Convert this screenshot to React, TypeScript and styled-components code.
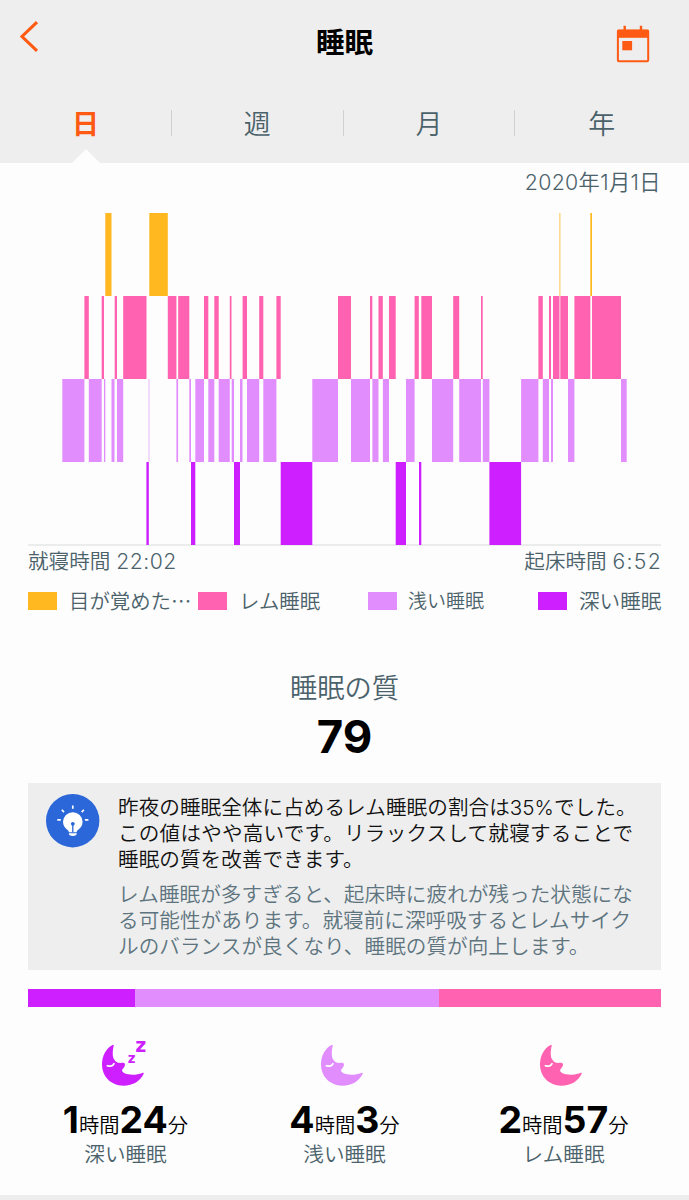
import React from 'react';
import styled, { createGlobalStyle } from 'styled-components';

const color = {
  awake: '#ffb81f',
  rem: '#ff62b0',
  light: '#e18dfd',
  deep: '#cd1fff',
  accent: '#ff5a13',
  slate: '#4b626b',
  panel: '#eeeeee',
  page: '#fdfdfd',
};

const GlobalStyle = createGlobalStyle`
  *, *::before, *::after { box-sizing: border-box; }
  body {
    margin: 0;
    background: ${color.page};
    font-family: Inter, "Noto Sans CJK JP", sans-serif;
    font-weight: 350;
    color: #000;
  }
  svg { display: block; }
`;

const Screen = styled.main`
  width: 689px;
  height: 1200px;
  overflow: hidden;
  display: flex;
  flex-direction: column;
  background: ${color.page};
`;

const Header = styled.header`
  height: 163px;
  flex: none;
  background: ${color.panel};
  display: flex;
  flex-direction: column;
`;

const TitleBar = styled.div`
  height: 86px;
  display: grid;
  grid-template-columns: 60px 1fr 60px;
  padding: 0 20px 0 20px;
`;

const IconButton = styled.button<{ $top: number; $end?: boolean }>`
  border: 0;
  padding: ${p => p.$top}px 0 0;
  background: none;
  display: flex;
  align-items: flex-start;
  justify-content: ${p => (p.$end ? 'flex-end' : 'flex-start')};
  padding-right: ${p => (p.$end ? 19 : 0)}px;
`;

const Title = styled.h1`
  margin: 0;
  text-align: center;
  font-size: 28.5px;
  line-height: 86px;
  font-weight: 700;
`;

const Tabs = styled.nav`
  height: 77px;
  display: grid;
  grid-template-columns: 171px 172.4px 171px 1fr;
`;

const Tab = styled.button<{ $active?: boolean }>`
  position: relative;
  border: 0;
  padding: 0;
  background: none;
  font: inherit;
  font-size: 27px;
  line-height: 74px;
  font-weight: ${p => (p.$active ? 700 : 350)};
  color: ${p => (p.$active ? color.accent : color.slate)};

  &:not(:first-child)::before {
    content: '';
    position: absolute;
    left: 0;
    top: 24px;
    width: 1px;
    height: 26px;
    background: #cfd1d2;
  }
`;

const TabPointer = styled.svg`
  position: absolute;
  left: 72px;
  bottom: 0;
`;

const DateLine = styled.div`
  height: 50px;
  flex: none;
  padding-right: 28px;
  text-align: right;
  font-size: 21.3px;
  line-height: 39px;
  letter-spacing: 0.35px;
  color: ${color.slate};
`;

const Chart = styled.svg`
  flex: none;
  margin-left: 28px;
`;

const TimeRow = styled.div`
  display: flex;
  flex: none;
  justify-content: space-between;
  height: 33px;
  padding: 0 27px 0 28px;
  font-size: 20.6px;
  line-height: 31px;
  color: ${color.slate};
`;

const Clock = styled.span<{ $spacing: number }>`
  font-size: 21.2px;
  letter-spacing: ${p => p.$spacing}px;
`;

const Legend = styled.div`
  display: grid;
  flex: none;
  grid-template-columns: 170px 170px 170px 1fr;
  padding-left: 28px;
  height: 46px;
`;

const LegendItem = styled.div<{ $size: number; $gap: number }>`
  display: flex;
  align-items: center;
  gap: ${p => p.$gap}px;
  height: 44px;
  font-size: ${p => p.$size}px;
  font-family: "Noto Sans CJK JP", sans-serif;
  white-space: nowrap;
  color: ${color.slate};
`;

const LegendText = styled.span`
  padding-bottom: 3px;
`;

const Swatch = styled.i<{ $color: string }>`
  width: 29px;
  height: 18px;
  background: ${p => p.$color};
`;

const Quality = styled.section`
  flex: none;
  height: 158px;
  padding-top: 44px;
  text-align: center;
`;

const QualityLabel = styled.div`
  font-size: 27.3px;
  line-height: 40px;
  color: ${color.slate};
`;

const QualityScore = styled.div`
  font-size: 45.5px;
  line-height: 56px;
  font-weight: 700;
`;

const Tip = styled.section`
  flex: none;
  display: flex;
  height: 187px;
  margin: 0 28px;
  padding: 11px 0 0 18px;
  gap: 18px;
  background: ${color.panel};
`;

const TipText = styled.div`
  padding-top: 1px;
  font-size: 20.6px;
  line-height: 26px;
  letter-spacing: 0.05px;
  white-space: nowrap;
`;

const Paragraph = styled.p<{ $muted?: boolean }>`
  margin: ${p => (p.$muted ? 9 : 0)}px 0 0;
  color: ${p => (p.$muted ? '#5d747e' : '#111')};
`;

const WideLine = styled.span`
  letter-spacing: 0.2px;
`;

const Distribution = styled.div`
  flex: none;
  display: flex;
  height: 18px;
  margin: 19px 28px 0;
`;

const Share = styled.div<{ $color: string; $grow: number }>`
  flex: ${p => p.$grow} 0 0;
  background: ${p => p.$color};
`;

const Stats = styled.section`
  flex: none;
  display: grid;
  grid-template-columns: repeat(3, 219px);
  padding-left: 16px;
  height: 188px;
`;

const Stat = styled.div`
  display: flex;
  flex-direction: column;
  align-items: center;
  padding-top: 38px;
`;

const Moon = styled.svg`
  overflow: visible;
  margin-right: 6px;
`;

const Duration = styled.div`
  margin-top: 14px;
  height: 41px;
  font-size: 20.3px;
  line-height: 40px;
  white-space: nowrap;

  b {
    font-size: 37.4px;
    line-height: 40px;
    font-weight: 700;
  }
`;

const StatLabel = styled.div`
  font-size: 20.6px;
  line-height: 28px;
  color: ${color.slate};
`;

const Footer = styled.div`
  flex: 1;
  background: #ededed;
`;

type Span = [number, number];

const phases: { fill: string; top: number; spans: Span[] }[] = [
  {
    fill: color.awake,
    top: 213,
    spans: [[105.3, 111.5], [149.3, 167.8], [559.5, 560.3], [590.3, 592]],
  },
  {
    fill: color.rem,
    top: 296,
    spans: [
      [84.4, 88.8], [101.7, 104], [114.7, 117], [123.2, 146.5], [167.8, 176.4], [178.2, 189.3],
      [204, 208.3], [214.3, 218.7], [229.8, 231.5], [242.6, 247], [259.2, 263.3], [276.4, 280.7],
      [338, 351], [370, 372.3], [378.5, 382.8], [389, 395.7], [414.6, 418.8], [421.3, 432],
      [453.2, 459.2], [481, 482.7], [538.4, 542.8], [549, 551], [553, 559.5], [560.3, 568],
      [574.4, 590.3], [592, 621],
    ],
  },
  {
    fill: color.light,
    top: 379,
    spans: [
      [62.3, 84.4], [88.8, 101.7], [104, 105.3], [111.5, 114.5], [117, 123.2], [148.7, 149.3],
      [176.4, 178.1], [189.3, 191], [195.3, 204], [208.3, 214.3], [218.7, 229.8], [231.7, 234],
      [240, 242.5], [247, 259.2], [263.3, 276.4], [312.3, 338], [351, 370], [372.4, 378.5],
      [382.9, 389], [406, 414.6], [432, 453.2], [459.2, 481], [482.8, 489.4], [521.1, 538.4],
      [542.8, 549], [551, 553], [568, 574.4], [621, 626.7],
    ],
  },
  {
    fill: color.deep,
    top: 462,
    spans: [
      [146.4, 148.8], [191, 195.3], [234, 240], [280.7, 312.3], [395.7, 406], [419, 421.3],
      [489.4, 521.1],
    ],
  },
];

function SleepChart() {
  return (
    <Chart width="633" height="333" viewBox="28 213 633 333">
      <rect x="28" y="544.5" width="633" height="1" fill="#d9dbdc" />
      {phases.map(({ fill, top, spans }) =>
        spans.map(([from, to]) => (
          <rect key={from} x={from} y={top} width={to - from} height="83" fill={fill} />
        )),
      )}
    </Chart>
  );
}

function MoonIcon({ fill, dreaming }: { fill: string; dreaming?: boolean }) {
  return (
    <Moon width="42" height="41" viewBox="35 45 126 123">
      <path
        fill={fill}
        d="M67 45C48 54 35 77 35 103C35 140 62 167 99 167C128 167 151 152 160 131C161 128 159 128 156 129C143 134 127 136 113 133C104 131 97 127 95 122C95 116 104 111 104 104C104 97 97 98 90 99C80 99 73 93 69 84C66 74 67 60 70 48C71 45 70 44 67 45Z"
      />
      <path d="M51 107Q66 112 71 101" fill="none" stroke="#fff" strokeWidth="5" strokeLinecap="round" />
      {dreaming && (
        <g fill={fill} fontFamily="DejaVu Sans" fontWeight="700">
          <text x="134.5" y="67" fontSize="57">z</text>
          <text x="112" y="100" fontSize="40">z</text>
        </g>
      )}
    </Moon>
  );
}

function BulbIcon() {
  return (
    <svg width="54" height="54" viewBox="0 0 54 54">
      <circle cx="26.7" cy="26.7" r="26.7" fill="#2b67d9" />
      <path
        d="M26.8 18.2a9.8 9.8 0 0 0-9.8 9.6c0 4 2.3 6.7 4.6 8.2.9.6 1.1 1.3 1.2 2.2h7.9c.1-.9.3-1.6 1.2-2.2 2.4-1.5 4.7-4.2 4.7-8.2a9.8 9.8 0 0 0-9.8-9.6Z"
        fill="#fff"
      />
      <path d="M22.8 39.3h8c0 1.8-1.4 2.7-4 2.7s-4-.9-4-2.7Z" fill="#fff" />
      <circle cx="26.8" cy="29.8" r="1.9" fill="#2b67d9" />
      <path d="M26.8 30v8.5" stroke="#2b67d9" strokeWidth="1.3" />
      <path
        d="M26.8 11.4v3.4M15.8 15.7l2.2 2.4M37.9 15.7l-2.2 2.4M11.3 25.8h3.5M38.9 25.8h3.5"
        stroke="#fff"
        strokeWidth="1.7"
      />
    </svg>
  );
}

export default function App() {
  return (
    <Screen>
      <GlobalStyle />
      <Header>
        <TitleBar>
          <IconButton $top={21} aria-label="back">
            <svg width="19" height="31" viewBox="0 0 19 31">
              <path d="M17 1.2L2 15.5L17 29.8" fill="none" stroke={color.accent} strokeWidth="3.1" />
            </svg>
          </IconButton>
          <Title>睡眠</Title>
          <IconButton $top={25} $end aria-label="calendar">
            <svg width="34" height="38" viewBox="0 0 34 38">
              <path d="M8.7 .8v6M25 .8v6" stroke={color.accent} strokeWidth="2.4" />
              <rect x="1.9" y="5.6" width="30.3" height="30.7" rx="1" fill="none" stroke={color.accent} strokeWidth="2" />
              <rect x="1.4" y="4.8" width="31.4" height="8" fill={color.accent} />
              <rect x="6.3" y="16" width="9.8" height="9.3" fill={color.accent} />
            </svg>
          </IconButton>
        </TitleBar>
        <Tabs>
          <Tab $active>
            日
            <TabPointer width="28" height="14" viewBox="0 0 28 14">
              <path d="M0 14L14 0L28 14Z" fill={color.page} />
            </TabPointer>
          </Tab>
          <Tab>週</Tab>
          <Tab>月</Tab>
          <Tab>年</Tab>
        </Tabs>
      </Header>

      <DateLine>2020年1月1日</DateLine>
      <SleepChart />
      <TimeRow>
        <span>就寝時間 <Clock $spacing={0.5}>22:02</Clock></span>
        <span>起床時間 <Clock $spacing={1.3}>6:52</Clock></span>
      </TimeRow>
      <Legend>
        <LegendItem $size={20.4} $gap={12}>
          <Swatch $color={color.awake} />
          <LegendText>目が覚めた…</LegendText>
        </LegendItem>
        <LegendItem $size={20.4} $gap={12}>
          <Swatch $color={color.rem} />
          <LegendText>レム睡眠</LegendText>
        </LegendItem>
        <LegendItem $size={19} $gap={11}>
          <Swatch $color={color.light} />
          <LegendText>浅い睡眠</LegendText>
        </LegendItem>
        <LegendItem $size={20.6} $gap={12}>
          <Swatch $color={color.deep} />
          <LegendText>深い睡眠</LegendText>
        </LegendItem>
      </Legend>

      <Quality>
        <QualityLabel>睡眠の質</QualityLabel>
        <QualityScore>79</QualityScore>
      </Quality>

      <Tip>
        <BulbIcon />
        <TipText>
          <Paragraph>
            昨夜の睡眠全体に占めるレム睡眠の割合は35%でした。<br />
            <WideLine>この値はやや高いです。リラックスして就寝することで</WideLine><br />
            睡眠の質を改善できます。
          </Paragraph>
          <Paragraph $muted>
            レム睡眠が多すぎると、起床時に疲れが残った状態にな<br />
            る可能性があります。就寝前に深呼吸するとレムサイク<br />
            ルのバランスが良くなり、睡眠の質が向上します。
          </Paragraph>
        </TipText>
      </Tip>

      <Distribution>
        <Share $color={color.deep} $grow={106.5} />
        <Share $color={color.light} $grow={304.3} />
        <Share $color={color.rem} $grow={222.2} />
      </Distribution>

      <Stats>
        <Stat>
          <MoonIcon fill={color.deep} dreaming />
          <Duration><b>1</b>時間<b>24</b>分</Duration>
          <StatLabel>深い睡眠</StatLabel>
        </Stat>
        <Stat>
          <MoonIcon fill={color.light} />
          <Duration><b>4</b>時間<b>3</b>分</Duration>
          <StatLabel>浅い睡眠</StatLabel>
        </Stat>
        <Stat>
          <MoonIcon fill={color.rem} />
          <Duration><b>2</b>時間<b>57</b>分</Duration>
          <StatLabel>レム睡眠</StatLabel>
        </Stat>
      </Stats>
      <Footer />
    </Screen>
  );
}
